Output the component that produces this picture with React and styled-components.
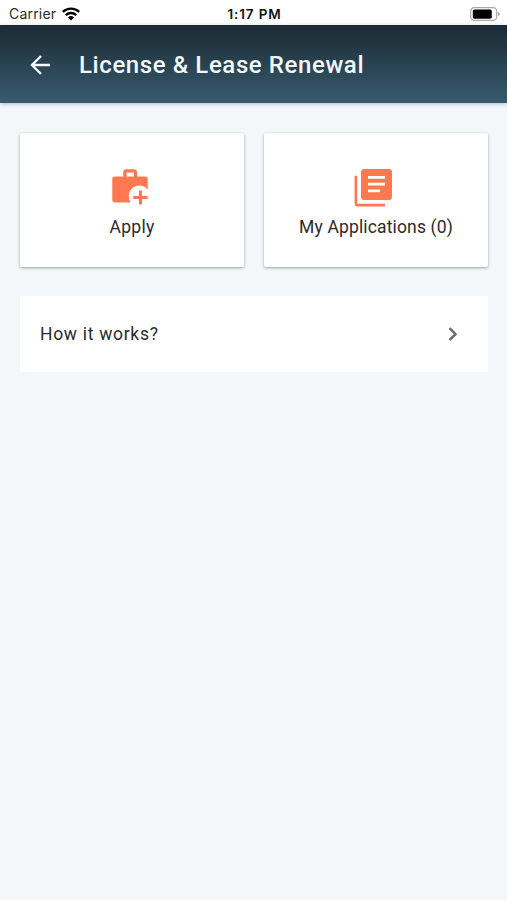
import React from 'react';
import styled, { createGlobalStyle, ThemeProvider } from 'styled-components';

const theme = {
  background: '#f3f7fa',
  surface: '#ffffff',
  text: '#2b2b2b',
  accent: '#ff784f',
  headerText: '#f2f8fc',
};

const GlobalStyle = createGlobalStyle`
  * {
    box-sizing: border-box;
  }

  body {
    margin: 0;
    background-color: ${({ theme }) => theme.background};
    font-family: Roboto, sans-serif;
  }
`;

// --- Styled components ---

const Screen = styled.div`
  display: flex;
  flex-direction: column;
  min-height: 100vh;
  background-color: ${({ theme }) => theme.background};
`;

const StatusBar = styled.div`
  display: grid;
  grid-template-columns: 1fr auto 1fr;
  align-items: center;
  height: 25px;
  padding: 2px 7px 0 9px;
  background-color: ${({ theme }) => theme.surface};
  color: #2b2b2b;
  font-family: Inter, sans-serif;
  font-size: 14px;
  line-height: 23px;
`;

const Carrier = styled.div`
  display: flex;
  align-items: center;
  gap: 6px;
  letter-spacing: 0.2px;
`;

const Time = styled.div`
  padding-top: 1px;
  font-size: 13.5px;
  font-weight: 600;
  line-height: 22px;
  letter-spacing: 0.85px;
  color: #111;
`;

const Battery = styled.div`
  display: flex;
  justify-content: flex-end;
`;

const Header = styled.header`
  display: flex;
  align-items: center;
  height: 78px;
  padding: 2px 0 0 30px;
  gap: 29px;
  background: linear-gradient(#1b2a33, #375b6e);
  box-shadow: 0 1px 4px rgba(40, 50, 90, 0.3);
  color: ${({ theme }) => theme.headerText};
`;

const Title = styled.h1`
  margin: 0;
  font-size: 24px;
  font-weight: 500;
  line-height: 32px;
  letter-spacing: 0.6px;
  white-space: nowrap;
`;

const Content = styled.main`
  display: flex;
  flex-direction: column;
  gap: 29px;
  padding: 30px 19px 0 20px;
`;

const Cards = styled.div`
  display: grid;
  grid-template-columns: 1fr 1fr;
  gap: 20px;
`;

const Card = styled.div`
  display: flex;
  flex-direction: column;
  align-items: center;
  height: 134px;
  padding-top: 35px;
  border-radius: 2px;
  background-color: ${({ theme }) => theme.surface};
  box-shadow: 0 1px 3px rgba(0, 0, 0, 0.36);
  color: ${({ theme }) => theme.accent};

  svg {
    margin-right: 5px;
  }
`;

const Label = styled.span`
  margin-top: 8px;
  font-size: 17.5px;
  line-height: 24px;
  letter-spacing: ${({ $spacing }) => $spacing};
  color: ${({ theme }) => theme.text};
  white-space: nowrap;
`;

const Row = styled.div`
  display: flex;
  align-items: center;
  justify-content: space-between;
  height: 76px;
  padding: 0 29px 0 20px;
  background-color: ${({ theme }) => theme.surface};
  color: #6b6b6b;
`;

const RowLabel = styled(Label)`
  margin-top: 0;
`;

// --- Icons ---

const WifiIcon = () => (
  <svg width="18" height="14" viewBox="0 0 18 14">
    <g fill="none" stroke="#000" strokeWidth="2.3">
      <path d="M0.8 4.9a11.7 11.7 0 0 1 16.4 0" />
      <path d="M3.8 8.1a7.5 7.5 0 0 1 10.4 0" />
    </g>
    <path d="M6 10.5a4.4 4.4 0 0 1 6 0L9 13.6z" fill="#000" />
  </svg>
);

const BatteryIcon = () => (
  <svg width="30" height="14" viewBox="0 0 30 14">
    <rect x="0.7" y="0.7" width="26" height="12.6" rx="3.6" fill="#fff" stroke="#aaa" strokeWidth="1.2" />
    <rect x="2.8" y="2.5" width="19" height="9.2" rx="1.6" fill="#000" />
    <path d="M27.8 4.7c2.7 1 2.7 3.4 0 4.4z" fill="#aaa" />
  </svg>
);

const BackIcon = () => (
  <svg width="20" height="20" viewBox="0 0 20 20" fill="none" stroke="currentColor" strokeWidth="2.4">
    <path d="M20 10H2.3M11 1L2 10l9 9" />
  </svg>
);

const ApplyIcon = () => (
  <svg width="40" height="39" viewBox="110 167.5 40 39" fill="currentColor">
    <path
      fillRule="evenodd"
      d="M115 176h8.3v-4.2a3 3 0 0 1 3-3h7.7a3 3 0 0 1 3 3v4.2h8a2.7 2.7 0 0 1 2.7 2.7v10.5A10.5 10.5 0 0 0 130.8 202H115a2.7 2.7 0 0 1-2.7-2.7v-20.6A2.7 2.7 0 0 1 115 176zm11.5 0h7.3v-4h-7.3z"
    />
    <path d="M139 190h3v5.5h5.7v3H142v5.5h-3v-5.5h-5.7v-3h5.7z" />
  </svg>
);

const ApplicationsIcon = () => (
  <svg width="40" height="39" viewBox="354 168 40 39" fill="currentColor">
    <path d="M354.6 175.8h2.6v28h27.8v2.7h-27.2a3.2 3.2 0 0 1-3.2-3.2z" />
    <path
      fillRule="evenodd"
      d="M364 169h25a3 3 0 0 1 3 3v25a3 3 0 0 1-3 3h-25a3 3 0 0 1-3-3v-25a3 3 0 0 1 3-3zm4 7v2.8h17V176zm0 6.7v2.9h17v-2.9zm0 6.7v2.8h12v-2.8z"
    />
  </svg>
);

const ChevronIcon = () => (
  <svg width="12" height="16" viewBox="0 0 12 16" fill="none" stroke="currentColor" strokeWidth="2.5">
    <path d="M2.5 2.2l6 6-6 6" />
  </svg>
);

const actions = [
  { label: 'Apply', Icon: ApplyIcon, spacing: '0.3px' },
  { label: 'My Applications (0)', Icon: ApplicationsIcon, spacing: '0.15px' },
];

export default function App() {
  return (
    <ThemeProvider theme={theme}>
      <GlobalStyle />
      <Screen>
        <StatusBar>
          <Carrier>
            Carrier
            <WifiIcon />
          </Carrier>
          <Time>1:17 PM</Time>
          <Battery>
            <BatteryIcon />
          </Battery>
        </StatusBar>

        <Header>
          <BackIcon />
          <Title>License &amp; Lease Renewal</Title>
        </Header>

        <Content>
          <Cards>
            {actions.map(({ label, Icon, spacing }) => (
              <Card key={label}>
                <Icon />
                <Label $spacing={spacing}>{label}</Label>
              </Card>
            ))}
          </Cards>

          <Row>
            <RowLabel $spacing="0.7px">How it works?</RowLabel>
            <ChevronIcon />
          </Row>
        </Content>
      </Screen>
    </ThemeProvider>
  );
}
